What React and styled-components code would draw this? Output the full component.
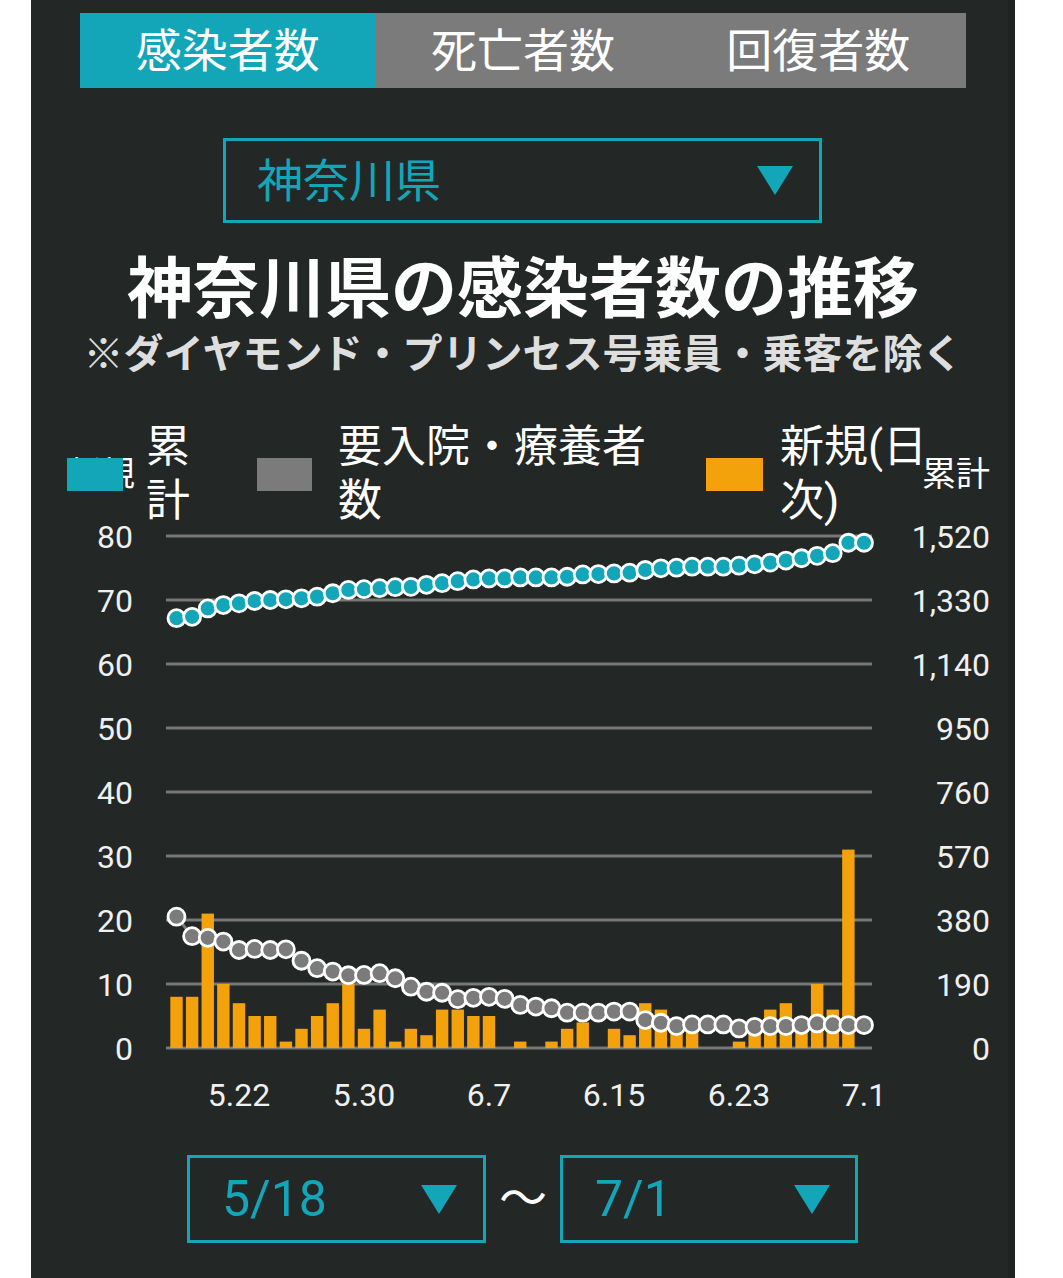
import React from 'react';
import styled, { createGlobalStyle } from 'styled-components';

const teal = '#13a6b9';
const grey = '#7b7b7b';
const orange = '#f4a20b';

const GlobalStyle = createGlobalStyle`
    html, body {
        margin: 0;
        padding: 0;
        background: #fff;
    }
    body {
        font-family: Roboto, "Noto Sans CJK JP", sans-serif;
    }
`;

const Panel = styled.div`
    margin-left: 31px;
    width: 984px;
    min-height: 1278px;
    box-sizing: border-box;
    padding-top: 13px;
    background: #232726;
    box-shadow: inset -7px 0 0 #1f2322;
    display: flex;
    flex-direction: column;
`;

const Tabs = styled.div`
    display: flex;
    width: 886px;
    height: 75px;
    margin-left: 49px;
`;

const Tab = styled.div`
    flex: 1;
    display: flex;
    align-items: center;
    justify-content: center;
    background: ${p => (p.$active ? teal : grey)};
    color: #fff;
    font-size: 46px;
    line-height: 1;
`;

const Select = styled.div`
    display: flex;
    align-items: center;
    justify-content: space-between;
    box-sizing: border-box;
    width: ${p => p.$width}px;
    height: ${p => p.$height}px;
    margin-left: ${p => p.$left || 0}px;
    margin-top: ${p => p.$top || 0}px;
    padding: 0 ${p => p.$padRight}px 0 ${p => p.$padLeft}px;
    border: 3px solid ${teal};
    color: ${teal};
    font-size: ${p => p.$fontSize}px;
    line-height: 1;
`;

const Caret = styled.span`
    width: 0;
    height: 0;
    border-left: 18px solid transparent;
    border-right: 18px solid transparent;
    border-top: 29px solid ${teal};
`;

const Title = styled.h1`
    margin: 27px 0 0;
    text-align: center;
    color: #fff;
    font-size: 66px;
    font-weight: 700;
    line-height: 80px;
`;

const Subtitle = styled.p`
    margin: 0;
    text-align: center;
    color: #dedede;
    font-size: 40px;
    font-weight: 700;
    line-height: 50px;
`;

const Legend = styled.div`
    position: relative;
    display: flex;
    align-items: center;
    height: 108px;
    margin-top: 40px;
    padding-left: 36px;
`;

const AxisTitle = styled.span`
    position: absolute;
    top: 50%;
    transform: translateY(-50%);
    ${p => (p.$side === 'left' ? 'left: 36px;' : 'right: 25px;')}
    color: #fff;
    font-size: 34px;
    line-height: 1;
`;

const LegendItem = styled.div`
    display: flex;
    align-items: center;
    margin-right: ${p => p.$gap || 0}px;
`;

const Swatch = styled.span`
    position: relative;
    width: ${p => p.$w}px;
    height: 33px;
    background: ${p => p.$color};
`;

const LegendText = styled.span`
    width: ${p => p.$width}px;
    margin-left: ${p => p.$offset}px;
    color: #fff;
    font-size: 44px;
    line-height: 54px;
`;

const ChartSvg = styled.svg`
    display: block;
    margin-top: -16px;
    font-family: Roboto, sans-serif;
`;

const DateRow = styled.div`
    display: flex;
    align-items: center;
    margin-top: 27px;
    padding-left: 156px;
`;

const Tilde = styled.span`
    width: 74px;
    text-align: center;
    color: #fff;
    font-size: 48px;
    line-height: 1;
`;

const bars = [8, 8, 21, 10, 7, 5, 5, 1, 3, 5, 7, 10, 3, 6, 1, 3, 2, 6, 6, 5, 5, 0, 1, 0, 1, 3, 4, 0, 3, 2, 7, 6, 3, 3, 0, 0, 1, 3, 6, 7, 4, 10, 6, 31, 0];
const inHospital = [390, 332, 327, 316, 291, 294, 291, 293, 259, 237, 227, 216, 217, 222, 207, 182, 167, 164, 145, 149, 152, 146, 128, 123, 118, 105, 105, 105, 108, 108, 83, 75, 65, 70, 70, 70, 58, 63, 65, 65, 68, 73, 70, 68, 68];
const total = [1276, 1280, 1305, 1315, 1320, 1327, 1330, 1332, 1335, 1340, 1350, 1360, 1362, 1365, 1368, 1369, 1375, 1380, 1386, 1391, 1394, 1394, 1397, 1397, 1397, 1399, 1406, 1407, 1409, 1411, 1419, 1424, 1426, 1429, 1429, 1429, 1432, 1436, 1441, 1447, 1454, 1461, 1469, 1500, 1500];

const leftTicks = [80, 70, 60, 50, 40, 30, 20, 10, 0];
const rightTicks = ['1,520', '1,330', '1,140', '950', '760', '570', '380', '190', '0'];
const dateTicks = [['5.22', 4], ['5.30', 12], ['6.7', 20], ['6.15', 28], ['6.23', 36], ['7.1', 44]];

const base = 1048;
const top = 536;
const cx = i => 176.5 + i * 15.625;
const yLeft = v => base - v * 6.4;
const yRight = v => base - v * ((base - top) / 1520);

function DotSeries({ values, color }) {
    const pts = values.map((v, i) => `${cx(i)},${yRight(v)}`).join(' ');
    return (
        <g>
            <polyline points={pts} fill="none" stroke={color} strokeWidth="3" />
            {values.map((v, i) => (
                <circle key={i} cx={cx(i)} cy={yRight(v)} r="8.5" fill={color} stroke="#fff" strokeWidth="2.8" />
            ))}
        </g>
    );
}

function Chart() {
    return (
        <ChartSvg width="984" height="616" viewBox="31 512 984 616">
            {leftTicks.map((t, k) => (
                <g key={t}>
                    <line x1="166" x2="872" y1={top + k * 64} y2={top + k * 64} stroke="#787878" strokeWidth="3" />
                    <text x="133" y={top + k * 64 + 12} textAnchor="end" fill="#f0f0f0" fontSize="32">{t}</text>
                    <text x="990" y={top + k * 64 + 12} textAnchor="end" fill="#f0f0f0" fontSize="32">{rightTicks[k]}</text>
                </g>
            ))}
            {bars.map((v, i) => (
                v > 0 && <rect key={i} x={cx(i) - 6.2} y={yLeft(v)} width="12.4" height={v * 6.4} fill={orange} />
            ))}
            <DotSeries values={inHospital} color={grey} />
            <DotSeries values={total} color={teal} />
            {dateTicks.map(([label, i]) => (
                <text key={label} x={cx(i)} y="1106" textAnchor="middle" fill="#f0f0f0" fontSize="32">{label}</text>
            ))}
        </ChartSvg>
    );
}

export default function App() {
    return (
        <>
            <GlobalStyle />
            <Panel>
                <Tabs>
                    <Tab $active>感染者数</Tab>
                    <Tab>死亡者数</Tab>
                    <Tab>回復者数</Tab>
                </Tabs>
                <Select $width={599} $height={85} $left={192} $top={50} $padLeft={31} $padRight={26} $fontSize={46}>
                    <span>神奈川県</span>
                    <Caret />
                </Select>
                <Title>神奈川県の感染者数の推移</Title>
                <Subtitle>※ダイヤモンド・プリンセス号乗員・乗客を除く</Subtitle>
                <Legend>
                    <AxisTitle $side="left">新規</AxisTitle>
                    <LegendItem $gap={61}>
                        <Swatch $w={56} $color={teal} />
                        <LegendText $offset={23} $width={50}>累計</LegendText>
                    </LegendItem>
                    <LegendItem $gap={48}>
                        <Swatch $w={55} $color={grey} />
                        <LegendText $offset={26} $width={320}>要入院・療養者数</LegendText>
                    </LegendItem>
                    <LegendItem>
                        <Swatch $w={57} $color={orange} />
                        <LegendText $offset={17} $width={152}>新規(日次)</LegendText>
                    </LegendItem>
                    <AxisTitle $side="right">累計</AxisTitle>
                </Legend>
                <Chart />
                <DateRow>
                    <Select $width={299} $height={88} $padLeft={32} $padRight={26} $fontSize={50}>
                        <span>5/18</span>
                        <Caret />
                    </Select>
                    <Tilde>～</Tilde>
                    <Select $width={298} $height={88} $padLeft={32} $padRight={25} $fontSize={50}>
                        <span>7/1</span>
                        <Caret />
                    </Select>
                </DateRow>
            </Panel>
        </>
    );
}
